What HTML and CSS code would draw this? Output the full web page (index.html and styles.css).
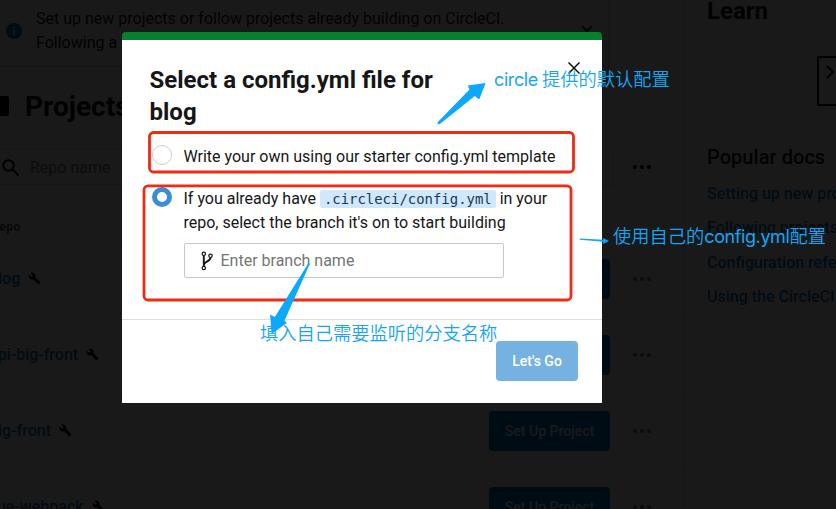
FILE: index.html
```html
<!DOCTYPE html>
<html lang="en">
<head>
<meta charset="utf-8">
<title>Projects</title>
<link rel="stylesheet" href="styles.css">
</head>
<body>
<svg class="defs" aria-hidden="true">
  <symbol id="wrench" viewBox="0 0 24 24"><path d="M22.7 19l-9.1-9.1c.9-2.3.4-5-1.5-6.9-2-2-5-2.400-7.400-1.300L9 6 6 9 1.600 4.700C.4 7.100.9 10.100 2.900 12.100c1.900 1.900 4.600 2.400 6.900 1.500l9.100 9.100c.4.4 1 .4 1.400 0l2.300-2.300c.5-.4.5-1.100.1-1.400z"/></symbol>
  <symbol id="dots" viewBox="0 0 20 6"><circle cx="3" cy="3" r="2.100"/><circle cx="10" cy="3" r="2.100"/><circle cx="17" cy="3" r="2.100"/></symbol>
</svg>
<div class="page">
  <main class="main">
    <div class="banner">
      <svg class="info" viewBox="0 0 16 16"><circle cx="8" cy="8" r="8" fill="currentColor"/><path d="M7.200 3.700h1.600v1.600H7.200zM7.200 6.700h1.600v5.500H7.200z" fill="#fff"/></svg>
      <p>Set up new projects or follow projects already building on CircleCI.<br>Following a</p>
      <svg class="banner-x" viewBox="0 0 12 12"><path d="M1 1l10 10M11 1L1 11"/></svg>
    </div>
    <div class="heading"><span class="heading-mark"></span><h1>Projects</h1></div>
    <div class="filter">
      <div class="search">
        <svg viewBox="0 0 18 18"><circle cx="6.500" cy="6.500" r="5.200"/><path d="M10.500 10.500l6 6"/></svg>
        <span>Repo name</span>
      </div>
      <svg class="dots"><use href="#dots"/></svg>
    </div>
    <div class="table-head">Repo</div>
    <div class="row"><a>blog</a><svg class="wrench"><use href="#wrench"/></svg><span class="setup">Set Up Project</span><svg class="dots faded"><use href="#dots"/></svg></div>
    <div class="row"><a>api-big-front</a><svg class="wrench"><use href="#wrench"/></svg><span class="setup">Set Up Project</span><svg class="dots faded"><use href="#dots"/></svg></div>
    <div class="row"><a>big-front</a><svg class="wrench"><use href="#wrench"/></svg><span class="setup">Set Up Project</span><svg class="dots faded"><use href="#dots"/></svg></div>
    <div class="row"><a>vue-webpack</a><svg class="wrench"><use href="#wrench"/></svg><span class="setup">Set Up Project</span><svg class="dots faded"><use href="#dots"/></svg></div>
  </main>
  <aside class="aside">
    <h2>Learn</h2>
    <div class="video"><svg viewBox="0 0 8 14"><path d="M1 1l6 6-6 6"/></svg></div>
    <h3>Popular docs</h3>
    <nav><a>Setting up new projects</a><a>Following projects</a><a>Configuration reference</a><a>Using the CircleCI CLI</a></nav>
  </aside>
</div>
<div class="overlay"></div>

<section class="modal">
  <div class="modal-body">
    <header><h2>Select a config.yml file for blog</h2>
      <svg class="close" viewBox="0 0 12 12"><path d="M.5.5l11 11M11.500.5l-11 11"/></svg></header>
    <div class="option"><span class="radio"></span><p>Write your own using our starter config.yml template</p></div>
    <div class="option second"><span class="radio on"></span>
      <div><p>If you already have <code>.circleci/config.yml</code> in your<br>repo, select the branch it's on to start building</p>
        <div class="input"><svg viewBox="0 0 12 20"><g fill="none" stroke="currentColor" stroke-width="1.200"><circle cx="2.800" cy="2.800" r="1.700"/><circle cx="2.800" cy="17" r="1.700"/><circle cx="9.500" cy="4.800" r="1.700"/></g><path d="M2.800 4.500v10.800M9.500 6.500c0 4-5.500 3.500-6.500 7" fill="none" stroke="currentColor" stroke-width="1.900"/></svg><span>Enter branch name</span></div>
      </div>
    </div>
  </div>
  <footer><span class="go">Let's Go</span></footer>
</section>

<svg class="marks" viewBox="0 0 836 509">
  <g class="boxes"><rect x="149.500" y="132.500" width="424" height="39.500" rx="4"/><rect x="144" y="185.800" width="427" height="114.200" rx="4"/></g>
  <g class="arrows">
    <path d="M437.400 122.500L469.500 89.500L467.800 85.400L485.600 83L479.200 99.500L474.800 96L439.500 124.200Q437.400 124.500 437.400 122.500Z"/>
    <path d="M310 263.500L284.500 320.500L286.800 323L271.500 334L270.200 314.500L274.800 317L308.500 263Z"/>
    <path d="M579.800 238.400L603.500 239.800L602.500 237.800L609 241L602.500 244.300L603.500 241.800L579.800 239.800Z"/>
  </g>
</svg>
<div class="note note-default"><span class="latin">circle</span> 提供的默认配置</div>
<div class="note note-own">使用自己的<span class="latin">config.yml</span>配置</div>
<div class="note note-branch">填入自己需要监听的分支名称</div>
</body>
</html>
```

FILE: styles.css
```css
* { box-sizing: border-box; }
body { margin: 0; width: 836px; height: 509px; overflow: hidden; position: relative; font: 16px/24px Roboto, sans-serif; color: #161616; background: #fff; }
h1, h2, h3, p { margin: 0; }
.defs { position: absolute; width: 0; height: 0; }
.page { display: flex; height: 509px; overflow: hidden; }
.main { flex: 0 0 685px; border-right: 1px solid #ddd; }
.banner { display: flex; width: 610px; height: 67px; padding: 7px 16px 0 6px; border: solid #ccc; border-width: 0 1px 1px 0; }
.banner p { margin-left: 14px; flex: 1; }
.info { width: 16px; height: 16px; margin-top: 16px; color: #0078ca; }
.banner-x { width: 12px; height: 12px; margin-top: 18px; stroke: #000; stroke-width: 1.5; }
.heading { display: flex; align-items: center; height: 82px; }
.heading-mark { width: 9px; height: 20px; background: #000; border-radius: 0 2px 2px 0; margin-top: -4px; }
.heading h1 { margin: -2px 0 0 16px; font-size: 28px; line-height: 36px; }
.filter { display: flex; align-items: center; height: 36px; padding-right: 32px; }
.search { display: flex; align-items: center; gap: 10px; width: 614px; height: 36px; padding: 1px 0 0 2px; border: solid #ddd; border-width: 1px 1px 1px 0; color: #777; }
.search svg { width: 18px; height: 18px; fill: none; stroke: #000; stroke-width: 2; }
.dots { width: 20px; height: 6px; margin-left: auto; }
.faded { fill: #777; }
.table-head { height: 56px; padding-top: 30px; border-bottom: 1px solid #eee; font-size: 12px; font-weight: 700; letter-spacing: .5px; text-indent: -9px; color: #555; }
.row { display: flex; align-items: center; height: 76px; padding-right: 32px; border-bottom: 1px solid #e8e8e8; }
.row a { margin-left: -11px; font-weight: 500; color: #0074c7; }
.wrench { width: 13px; height: 13px; margin-left: 8px; }
.setup { display: flex; align-items: center; justify-content: center; width: 121px; height: 40px; margin-left: auto; border-radius: 4px; background: #0078ca; color: #fff; font-size: 14px; font-weight: 500; }
.row .dots { margin-left: 22px; }
.aside { flex: 1; padding: 0 0 0 22px; overflow: hidden; white-space: nowrap; }
.aside h2 { font-size: 24px; line-height: 32px; margin-top: -5px; }
.video { width: 60px; height: 50px; margin: 29px 0 0 110px; padding: 7px; border: 2px solid #111; border-radius: 2px; }
.video svg { display: block; width: 8px; height: 14px; fill: none; stroke: #000; stroke-width: 2; }
.aside h3 { margin-top: 39px; font-size: 20px; line-height: 24px; font-weight: 500; letter-spacing: .05px; }
.aside nav { display: flex; flex-direction: column; gap: 10.300px; margin-top: 13px; font-weight: 500; color: #0074c7; }
.overlay { position: absolute; inset: 0; background: rgba(0,0,0,.9); }
.modal { position: absolute; left: 122px; top: 32px; width: 480px; height: 371px; border-top: 8px solid #05802d; border-radius: 4px 4px 0 0; background: #fff; }
.modal-body { height: 280px; padding: 24px 22px 0 27.500px; border-bottom: 1px solid #ddd; }
.modal header { display: flex; justify-content: space-between; height: 64px; }
.modal h2 { width: 310px; font-size: 24px; line-height: 32px; }
.close { width: 12px; height: 12px; margin-top: -2px; stroke: #111; stroke-width: 1.500; }
.option { display: flex; gap: 12px; margin-top: 17px; }
.option.second { margin-top: 18px; }
.option p { white-space: nowrap; }
.radio { flex: 0 0 20px; height: 20px; margin: 0 0 0 2px; border: 1px solid #ccc; border-radius: 50%; background: #fff; }
.radio.on { border: 5px solid #3a8dd6; }
code { padding: 1px 4px; border-radius: 2px; background: #cfe8fc; color: #183957; font: 13.950px/18px "DejaVu Sans Mono", monospace; }
.input { display: flex; align-items: center; width: 320px; height: 35px; margin-top: 8px; padding-left: 16px; border: 1px solid #c7c7c7; border-radius: 2px; color: #757575; }
.input svg { width: 12px; height: 20px; margin-right: 8px; color: #161616; }
.modal footer { display: flex; justify-content: flex-end; padding: 21px 24px 0; }
.go { display: flex; align-items: center; justify-content: center; width: 82px; height: 40px; border-radius: 4px; background: #75b2e1; color: #fff; font-size: 14px; font-weight: 500; }
.marks { position: absolute; inset: 0; width: 836px; height: 509px; }
.boxes { fill: none; stroke: #ef2b13; stroke-width: 2.800; }
.arrows { fill: #0ba8ff; }
.note { position: absolute; white-space: nowrap; font: 350 18.250px/26px "Noto Sans CJK SC", sans-serif; color: #16a5f5; }
.latin { font-family: Inter, sans-serif; font-weight: 400; font-size: 18px; letter-spacing: -.4px; }
.note-default { left: 494px; top: 65px; }
.note-own { left: 613px; top: 222px; }
.note-branch { left: 260px; top: 319px; }
```
